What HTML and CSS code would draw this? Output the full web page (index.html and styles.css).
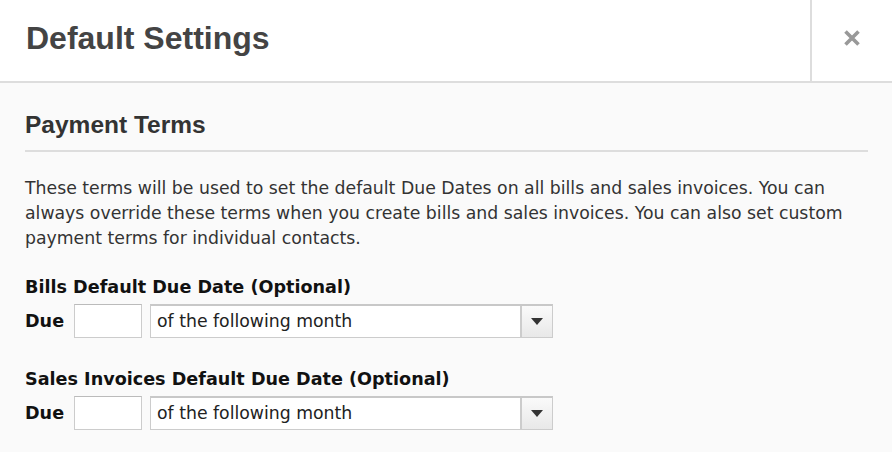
FILE: index.html
```html
<!DOCTYPE html>
<html>
<head>
<meta charset="utf-8">
<link rel="stylesheet" href="styles.css">
</head>
<body>
<div class="modal">
  <header class="modal-header">
    <h1 class="title">Default Settings</h1>
    <button class="close" aria-label="Close">
      <svg width="18" height="18" viewBox="0 0 18 18"><path d="M2.5 2.5 L15.5 15.5 M15.5 2.5 L2.5 15.5" stroke="#999" stroke-width="3.6" fill="none"/></svg>
    </button>
  </header>
  <div class="modal-body">
    <h2 class="section-title">Payment Terms</h2>
    <p class="desc">These terms will be used to set the default Due Dates on all bills and sales invoices. You can always override these terms when you create bills and sales invoices. You can also set custom payment terms for individual contacts.</p>
    <div class="field">
      <div class="label">Bills Default Due Date (Optional)</div>
      <div class="row">
        <span class="due">Due</span>
        <input class="days" type="text">
        <div class="select"><span class="select-text">of the following month</span><span class="arrow"><svg width="12" height="7" viewBox="0 0 12 7"><path d="M0 0 H12 L6 7 Z" fill="#333"/></svg></span></div>
      </div>
    </div>
    <div class="field">
      <div class="label">Sales Invoices Default Due Date (Optional)</div>
      <div class="row">
        <span class="due">Due</span>
        <input class="days" type="text">
        <div class="select"><span class="select-text">of the following month</span><span class="arrow"><svg width="12" height="7" viewBox="0 0 12 7"><path d="M0 0 H12 L6 7 Z" fill="#333"/></svg></span></div>
      </div>
    </div>
  </div>
</div>
</body>
</html>
```
FILE: styles.css
```css
* { box-sizing: border-box; }
html, body { margin: 0; padding: 0; }
body { background: #fafafa; width: 892px; height: 452px; overflow: hidden; }
.modal { display: flex; flex-direction: column; }
.modal-header {
  display: flex; align-items: stretch; height: 83px;
  background: #fff; border-bottom: 2px solid #ddd;
}
.title {
  flex: 1; margin: 0; padding: 0 0 0 26px;
  font-family: "Liberation Sans", Arial, sans-serif; font-weight: bold;
  font-size: 32px; line-height: 76px; color: #444;
}
.close {
  width: 82px; border: 0; border-left: 2px solid #ddd; background: #fff;
  display: flex; align-items: center; justify-content: center; padding: 0 0 5px 0;
}
.modal-body { padding: 0 24px 0 25px; }
.section-title {
  margin: 0; padding: 28px 0 11px;
  font-family: "Liberation Sans", Arial, sans-serif; font-weight: bold;
  font-size: 24.5px; line-height: 28px; color: #333;
  border-bottom: 2px solid #ddd;
}
.desc {
  margin: 24px 0 0; font-family: "DejaVu Sans", Verdana, sans-serif;
  font-size: 17.3px; line-height: 25px; color: #333;
}
.field { margin-top: 25px; }
.field + .field { margin-top: 30px; }
.label {
  font-family: "DejaVu Sans", Verdana, sans-serif; font-weight: bold;
  font-size: 17.6px; line-height: 22px; color: #111;
}
.row { display: flex; align-items: center; margin-top: 6px; height: 34px; }
.due {
  font-family: "DejaVu Sans", Verdana, sans-serif; font-weight: bold;
  font-size: 17.6px; color: #111; width: 49px;
}
.days {
  width: 68px; height: 34px; border: 1px solid #ccc; border-top-color: #bbb;
  background: #fff; margin: 0 8px 0 0; padding: 0;
}
.select {
  width: 403px; height: 34px; display: flex; border: 1px solid #ccc; border-top: 2px solid #c8c8c8;
  background: #fff;
}
.select-text {
  flex: 1; font-family: "DejaVu Sans", Verdana, sans-serif; font-size: 17.3px;
  line-height: 30px; color: #222; padding-left: 6px;
}
.arrow {
  width: 32px; border-left: 2px solid #ccc;
  background: linear-gradient(#fafafa, #e8e8e8);
  display: flex; align-items: center; justify-content: center;
}
```
